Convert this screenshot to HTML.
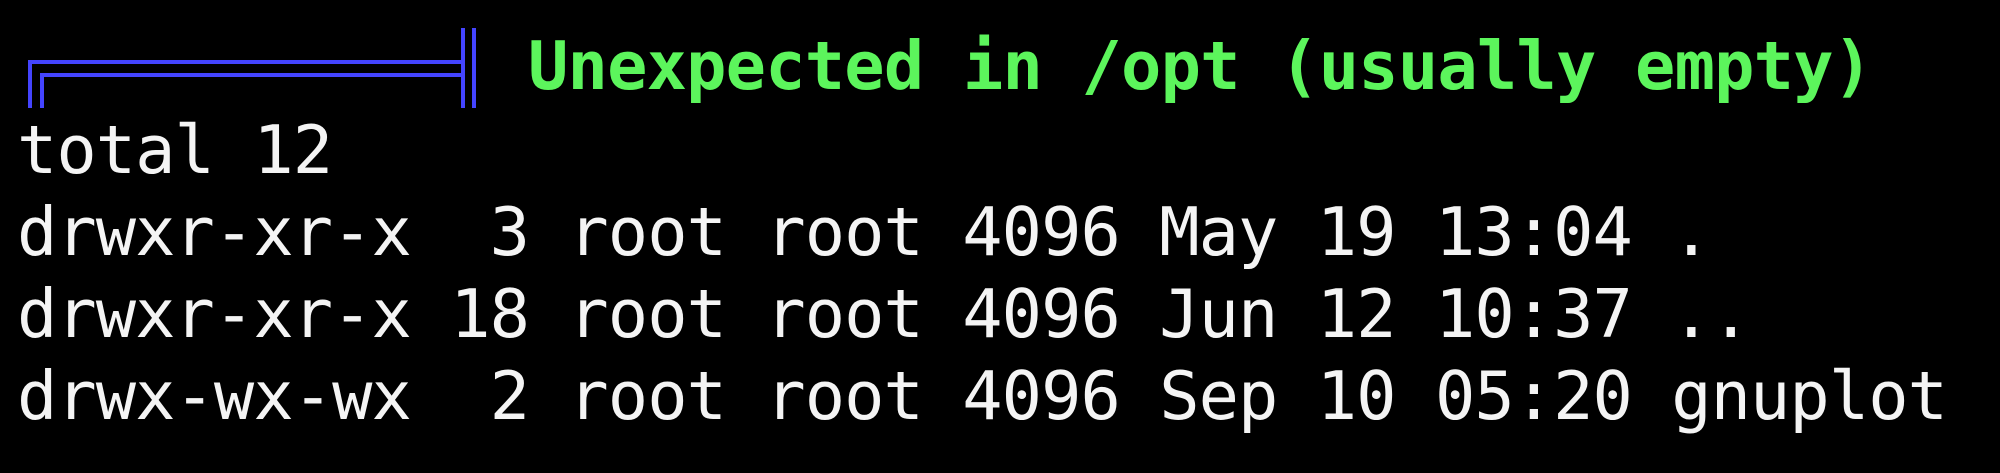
<!DOCTYPE html>
<html><head><meta charset="utf-8"><style>
html,body{margin:0;padding:0;background:#000;width:2000px;height:473px;overflow:hidden}
.t{position:absolute;left:17px;font-family:"DejaVu Sans Mono","Liberation Mono",monospace;font-size:67px;line-height:82px;white-space:pre;color:#f4f4f4;letter-spacing:-0.95px}
.g{position:absolute;left:528px;top:25px;font-family:"DejaVu Sans Mono","Liberation Mono",monospace;font-size:67px;line-height:83px;white-space:pre;color:#5cf55c;font-weight:bold;letter-spacing:-0.8px}
</style></head><body>
<svg width="2000" height="473" style="position:absolute;left:0;top:0">
<g stroke="#4444ff" stroke-width="4" fill="none">
<path d="M30 108 V62 H462"/>
<path d="M42 108 V75 H462"/>
<path d="M463 28 V108"/>
<path d="M474 28 V108"/>
</g>
</svg>
<div class="g">Unexpected in /opt (usually empty)</div>
<div class="t" style="top:109px">total 12
drwxr-xr-x  3 root root 4096 May 19 13:04 .
drwxr-xr-x 18 root root 4096 Jun 12 10:37 ..
drwx-wx-wx  2 root root 4096 Sep 10 05:20 gnuplot</div>
</body></html>
